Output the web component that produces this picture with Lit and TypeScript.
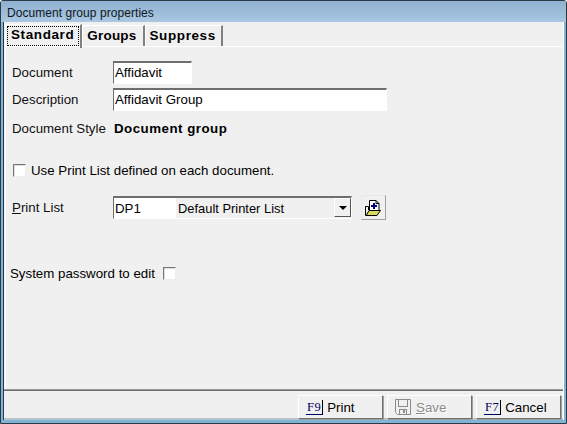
import { LitElement, html, css, svg } from "lit";
import { customElement } from "lit/decorators.js";

const folderIcon = svg`<svg class="ico" width="17" height="17" viewBox="0 0 17 17">
<path d="M5.5 .5H12L15 3.5V11H5.5Z" fill="#fff" stroke="#000"/>
<path d="M12 .5V3.5H15" fill="none" stroke="#000"/>
<path d="M9 3h2v2h2v2h-2v2H9V7H7V5h2z" fill="#000080"/>
<path d="M1.5 6.5V15.5H13L16.5 10.5H5L2.5 15" fill="#d8d860" stroke="#000"/>
<path d="M1.5 6.5H4.5V10" fill="none" stroke="#000"/>
</svg>`;

const diskIcon = svg`<svg class="ico" width="16" height="16" viewBox="0 0 16 16">
<path d="M.5 .5H15.5V15.5H2.5L.5 13.5Z" fill="none" stroke="#8c8c8c"/>
<rect x="3.5" y=".5" width="9" height="7" fill="none" stroke="#8c8c8c"/>
<rect x="4.5" y="10.5" width="7" height="5" fill="none" stroke="#8c8c8c"/>
<rect x="8" y="11" width="2" height="3" fill="#8c8c8c"/>
</svg>`;

@customElement("app-root")
export class AppRoot extends LitElement {
  static styles = css`
    :host { display: block; width: 567px; height: 424px; font-family: "Liberation Sans", Arial, sans-serif; font-size: 13.3px; color: #000; }
    .win { box-sizing: border-box; width: 567px; height: 424px; display: flex; flex-direction: column; background: #7fb4d6; border: 1px solid #2b3a44; border-radius: 3px 3px 0 0; padding: 0 2px 3px 2px; }
    .title { box-sizing: border-box; height: 21px; flex: none; margin: 0 -2px; padding: 3px 6px 0; display: flex; align-items: center; background: linear-gradient(#8fb0cf, #a9c7e2); font-size: 12px; letter-spacing: .06px; color: #101820; }
    .client { flex: 1; display: flex; flex-direction: column; background: #f0f0f0; min-height: 0; border-left: 1px solid #2b3a44; border-right: 1px solid #fff; }
    .tabs { display: flex; height: 24px; flex: none; padding: 3px 0 0 1px; box-sizing: border-box; font-weight: bold; font-size: 13.5px; }
    .tab { padding: 0 6px 0 4px; height: 21px; line-height: 20px; border-right: 2px solid #808080; border-left: 1px solid #fff; border-top: 1px solid #fff; white-space: nowrap; letter-spacing: .2px; }
    .tab.wide { letter-spacing: .6px; padding: 0 5px 0 4px; }
    .tab.active { height: 23px; margin-top: -1px; padding: 0 1px; position: relative; z-index: 1; letter-spacing: .6px; }
    .tab.active span { display: block; outline: 1px dotted #000; outline-offset: -1px; padding: 0 5px 0 4px; height: 20px; margin-top: 1px; line-height: 17px; }
    .body { flex: 1; border-left: 1px solid #fff; border-top: 1px solid #fff; margin-left: 1px; padding: 0 0 0 6px; display: flex; flex-direction: column; }
    .row { display: flex; align-items: center; }
    .label { width: 101px; flex: none; color: #111; }
    .field { box-sizing: border-box; height: 23px; background: #fff; border: 1px solid; border-color: #6e6e6e #fff #fff #6e6e6e; border-top-width: 2px; padding: 0 0 1px 1px; display: flex; align-items: center; }
    .doc { margin-top: 14px; }
    .doc .field { width: 79px; }
    .desc { margin-top: 4px; }
    .desc .field { width: 274px; }
    .style { margin-top: 7px; height: 20px; }
    .style .label { width: 102px; }
    .style b { letter-spacing: .5px; }
    .check { box-sizing: border-box; width: 13px; height: 13px; flex: none; background: #fff; border: 1px solid; border-color: #777 #eee #eee #777; box-shadow: inset 1px 1px 0 #ddd; }
    .use { margin-top: 24px; height: 16px; gap: 5px; }
    .use .check { margin-left: 1px; }
    .plist { margin-top: 17px; }
    .u { text-decoration: underline; }
    .combo { box-sizing: border-box; width: 239px; height: 23px; display: flex; background: #f0f0f0; border: 1px solid; border-color: #6e6e6e #fff #fff #6e6e6e; border-top-width: 2px; align-items: stretch; }
    .code { width: 62px; background: #fff; padding-left: 1px; box-sizing: border-box; display: flex; align-items: center; flex: none; }
    .name { flex: 1; display: flex; align-items: center; padding-left: 2px; font-size: 12.9px; }
    .arrow { width: 17px; margin: 0 0 1px; box-sizing: border-box; background: #f0f0f0; border: 1px solid; border-color: #fff #555 #555 #fff; display: flex; align-items: center; justify-content: center; }
    .arrow i { display: block; width: 0; height: 0; border: 4px solid transparent; border-top-color: #000; border-bottom: 0; }
    .fbtn { box-sizing: border-box; margin-left: 9px; width: 25px; height: 25px; background: #f0f0f0; border: 1px solid; display: flex; align-items: center; justify-content: center; border-color: #e8e8e8 #a0a0a0 #a0a0a0 #e8e8e8; padding: 2px 3px 0 0; }
    .sys { margin-top: 45px; margin-left: -2px; height: 16px; gap: 8px; }
    .foot { height: 30px; flex: none; box-sizing: border-box; border-top: 1px solid #6e6e6e; box-shadow: 0 -1px 0 #9a9a9a; display: flex; justify-content: flex-end; gap: 4px; padding: 4px 2px 0 0; border-bottom: 2px solid #b8c4cc; }
    .btn { box-sizing: border-box; width: 85px; height: 24px; background: #f0f0f0; border: 1px solid; border-color: #fff #707070 #707070 #fff; box-shadow: 1px 1px 0 #a0a0a0; display: flex; align-items: center; gap: 4px; padding-left: 7px; }
    .key { font-family: "Liberation Serif", serif; font-size: 12.5px; color: #000060; border-right: 1px solid #000; border-bottom: 1px solid #000060; padding: 0 1px; line-height: 14px; letter-spacing: .5px; }
    .btn.dis { color: #8c8c8c; text-shadow: 1px 1px 0 #fff; padding-left: 7px; gap: 5px; }
    .ico { display: block; }
  `;

  render() {
    return html`<div class="win">
      <div class="title">Document group properties</div>
      <div class="client">
        <div class="tabs">
          <div class="tab active"><span>Standard</span></div>
          <div class="tab">Groups</div>
          <div class="tab wide">Suppress</div>
        </div>
        <div class="body">
          <div class="row doc"><div class="label">Document</div><div class="field">Affidavit</div></div>
          <div class="row desc"><div class="label">Description</div><div class="field">Affidavit Group</div></div>
          <div class="row style"><div class="label">Document Style</div><b>Document group</b></div>
          <div class="row use"><div class="check"></div><span>Use Print List defined on each document.</span></div>
          <div class="row plist">
            <div class="label"><span class="u">P</span>rint List</div>
            <div class="combo"><div class="code">DP1</div><div class="name">Default Printer List</div><div class="arrow"><i></i></div></div>
            <div class="fbtn">${folderIcon}</div>
          </div>
          <div class="row sys"><span>System password to edit</span><div class="check"></div></div>
        </div>
        <div class="foot">
          <div class="btn"><span class="key">F9</span>Print</div>
          <div class="btn dis">${diskIcon}<span><span class="u">S</span>ave</span></div>
          <div class="btn"><span class="key">F7</span>Cancel</div>
        </div>
      </div>
    </div>`;
  }
}
